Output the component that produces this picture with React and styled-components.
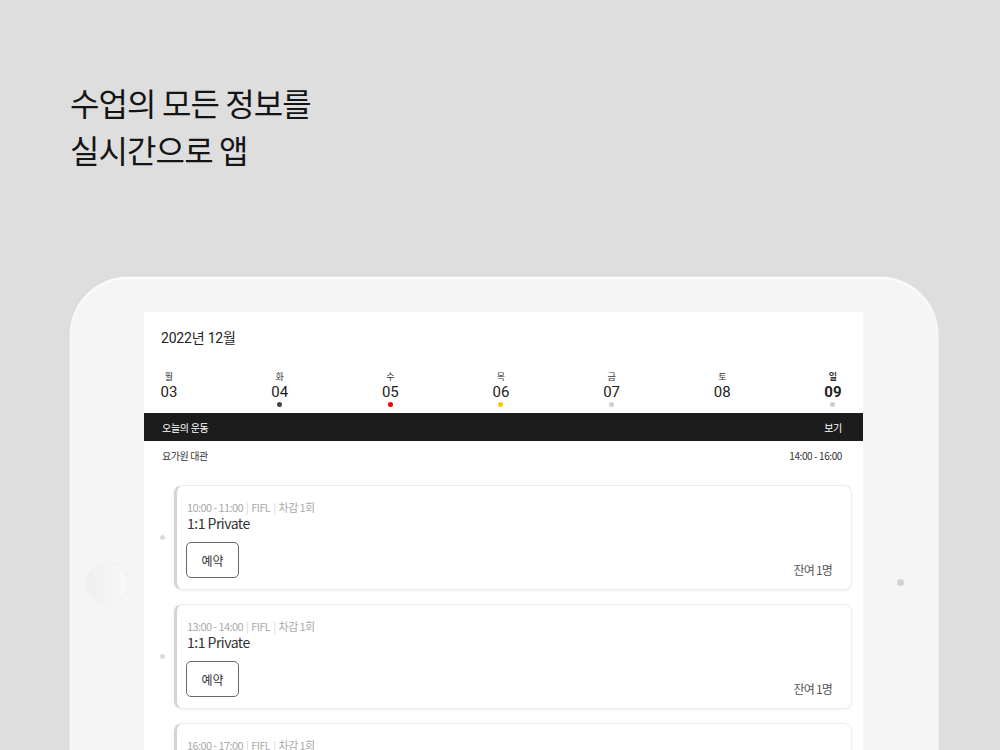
import React from "react";
import styled, { createGlobalStyle } from "styled-components";

const GlobalStyle = createGlobalStyle`
  html, body {
    margin: 0;
    padding: 0;
    background: #dedede;
    overflow: hidden;
  }
  body {
    font-family: "Noto Sans CJK KR", "Noto Sans", sans-serif;
    color: #222;
  }
  * { box-sizing: border-box; }
`;

const Page = styled.div`
  width: 1000px;
  height: 750px;
  overflow: hidden;
  background: #dedede;
  display: flex;
  flex-direction: column;
`;

const Heading = styled.h1`
  margin: 0;
  padding: 79px 0 0 70px;
  font-size: 32px;
  line-height: 47px;
  font-weight: 400;
  letter-spacing: -0.9px;
  color: #151515;
`;

const Tablet = styled.div`
  margin: 104px 0 0 70px;
  width: 868px;
  flex: 1;
  background: #f5f5f5;
  border-radius: 58px 58px 0 0;
  box-shadow: 0 0 0 1px #e8e8e8, inset 0 2px 2px rgba(255, 255, 255, 0.8),
    -1px -1px 2px rgba(0, 0, 0, 0.06);
  display: grid;
  grid-template-columns: 74px 1fr 75px;
`;

const LeftBezel = styled.div`
  display: flex;
  justify-content: center;
  padding-top: 286px;
`;

const HomeButton = styled.div`
  width: 40px;
  height: 40px;
  border-radius: 50%;
  background: linear-gradient(to right, #efefef, #f8f8f8);
  box-shadow: 0 0 0 1px #f1f1f1, 0 0 3px rgba(0, 0, 0, 0.05);
`;

const RightBezel = styled.div`
  display: flex;
  justify-content: center;
  padding-top: 302px;
`;

const Camera = styled.div`
  width: 7px;
  height: 7px;
  border-radius: 50%;
  background: #d3d3d3;
`;

const Screen = styled.div`
  margin-top: 35px;
  background: #fff;
  display: flex;
  flex-direction: column;
`;

const MonthTitle = styled.div`
  padding: 16px 0 0 17px;
  font-family: Roboto, "Noto Sans CJK KR", sans-serif;
  font-size: 14px;
  line-height: 20px;
  letter-spacing: -0.2px;
  color: #222;
`;

const Week = styled.div`
  display: flex;
  justify-content: space-between;
  padding: 23px 22px 6px 17px;
`;

const Day = styled.div`
  display: flex;
  flex-direction: column;
  align-items: center;
  width: 16px;
`;

const DayLabel = styled.span`
  font-size: 9px;
  line-height: 12px;
  color: #333;
  font-weight: ${(p) => (p.$active ? 700 : 400)};
`;

const DayNum = styled.span`
  font-family: Roboto, "Noto Sans CJK KR", sans-serif;
  font-size: 15px;
  line-height: 18px;
  color: #222;
  font-weight: ${(p) => (p.$active ? 700 : 400)};
`;

const DayDot = styled.span`
  margin-top: 1px;
  width: 5px;
  height: 5px;
  border-radius: 50%;
  background: ${(p) => p.$color || "transparent"};
`;

const Bar = styled.div`
  height: 28px;
  background: #1c1c1c;
  color: #fff;
  display: flex;
  align-items: center;
  justify-content: space-between;
  padding: 0 21px 0 18px;
  font-size: 10px;
  letter-spacing: -0.3px;
`;

const InfoRow = styled.div`
  height: 28px;
  display: flex;
  align-items: center;
  justify-content: space-between;
  padding: 0 21px 0 18px;
  font-size: 10px;
  color: #333;
  letter-spacing: -0.4px;
`;

const List = styled.div`
  display: flex;
  flex-direction: column;
  gap: 14px;
  padding: 16px 11px 0 16px;
`;

const Row = styled.div`
  display: flex;
  align-items: center;
  gap: 9px;
`;

const TimelineDot = styled.span`
  width: 5px;
  height: 5px;
  border-radius: 50%;
  background: #dcdcdc;
  flex-shrink: 0;
`;

const Card = styled.div`
  flex: 1;
  height: 105px;
  border: 1px solid #ededed;
  border-left: 3px solid #d4d4d4;
  border-radius: 8px;
  box-shadow: 0 1px 3px rgba(0, 0, 0, 0.06);
  background: #fff;
  display: flex;
  justify-content: space-between;
  align-items: flex-end;
  padding: 13px 19px 11px 9px;
`;

const CardMain = styled.div`
  display: flex;
  flex-direction: column;
  align-items: flex-start;
  align-self: stretch;
`;

const Meta = styled.div`
  font-size: 11px;
  line-height: 16px;
  color: #a9a9a9;
  letter-spacing: -0.6px;
  padding-left: 1px;
`;

const Sep = styled.span`
  color: #d5d5d5;
  margin: 0 3px;
`;

const ClassName = styled.div`
  font-size: 14px;
  line-height: 16px;
  color: #333;
  letter-spacing: -0.5px;
  padding-left: 1px;
`;

const ReserveButton = styled.button`
  margin-top: 11px;
  width: 53px;
  height: 36px;
  border: 1px solid #6a6a6a;
  border-radius: 5px;
  background: #fff;
  font-family: "Noto Sans CJK KR", sans-serif;
  font-size: 12px;
  color: #333;
  padding: 0;
`;

const Remain = styled.div`
  font-size: 12px;
  line-height: 16px;
  color: #555;
  letter-spacing: -0.8px;
`;

const days = [
  { label: "월", num: "03" },
  { label: "화", num: "04", dot: "#444" },
  { label: "수", num: "05", dot: "#ee0000" },
  { label: "목", num: "06", dot: "#f6cc00" },
  { label: "금", num: "07", dot: "#cfcfcf" },
  { label: "토", num: "08" },
  { label: "일", num: "09", dot: "#cfcfcf", active: true },
];

const classes = [
  { time: "10:00 - 11:00" },
  { time: "13:00 - 14:00" },
  { time: "16:00 - 17:00" },
];

export default function App() {
  return (
    <>
      <GlobalStyle />
      <Page>
        <Heading>
          수업의 모든 정보를
          <br />
          실시간으로 앱
        </Heading>
        <Tablet>
          <LeftBezel>
            <HomeButton />
          </LeftBezel>
          <Screen>
            <MonthTitle>2022년 12월</MonthTitle>
            <Week>
              {days.map((d) => (
                <Day key={d.num}>
                  <DayLabel $active={d.active}>{d.label}</DayLabel>
                  <DayNum $active={d.active}>{d.num}</DayNum>
                  <DayDot $color={d.dot} />
                </Day>
              ))}
            </Week>
            <Bar>
              <span>오늘의 운동</span>
              <span>보기</span>
            </Bar>
            <InfoRow>
              <span>요가원 대관</span>
              <span>14:00 - 16:00</span>
            </InfoRow>
            <List>
              {classes.map((c) => (
                <Row key={c.time}>
                  <TimelineDot />
                  <Card>
                    <CardMain>
                      <Meta>
                        {c.time}
                        <Sep>|</Sep>FIFL<Sep>|</Sep>차감 1회
                      </Meta>
                      <ClassName>1:1 Private</ClassName>
                      <ReserveButton>예약</ReserveButton>
                    </CardMain>
                    <Remain>잔여 1명</Remain>
                  </Card>
                </Row>
              ))}
            </List>
          </Screen>
          <RightBezel>
            <Camera />
          </RightBezel>
        </Tablet>
      </Page>
    </>
  );
}
